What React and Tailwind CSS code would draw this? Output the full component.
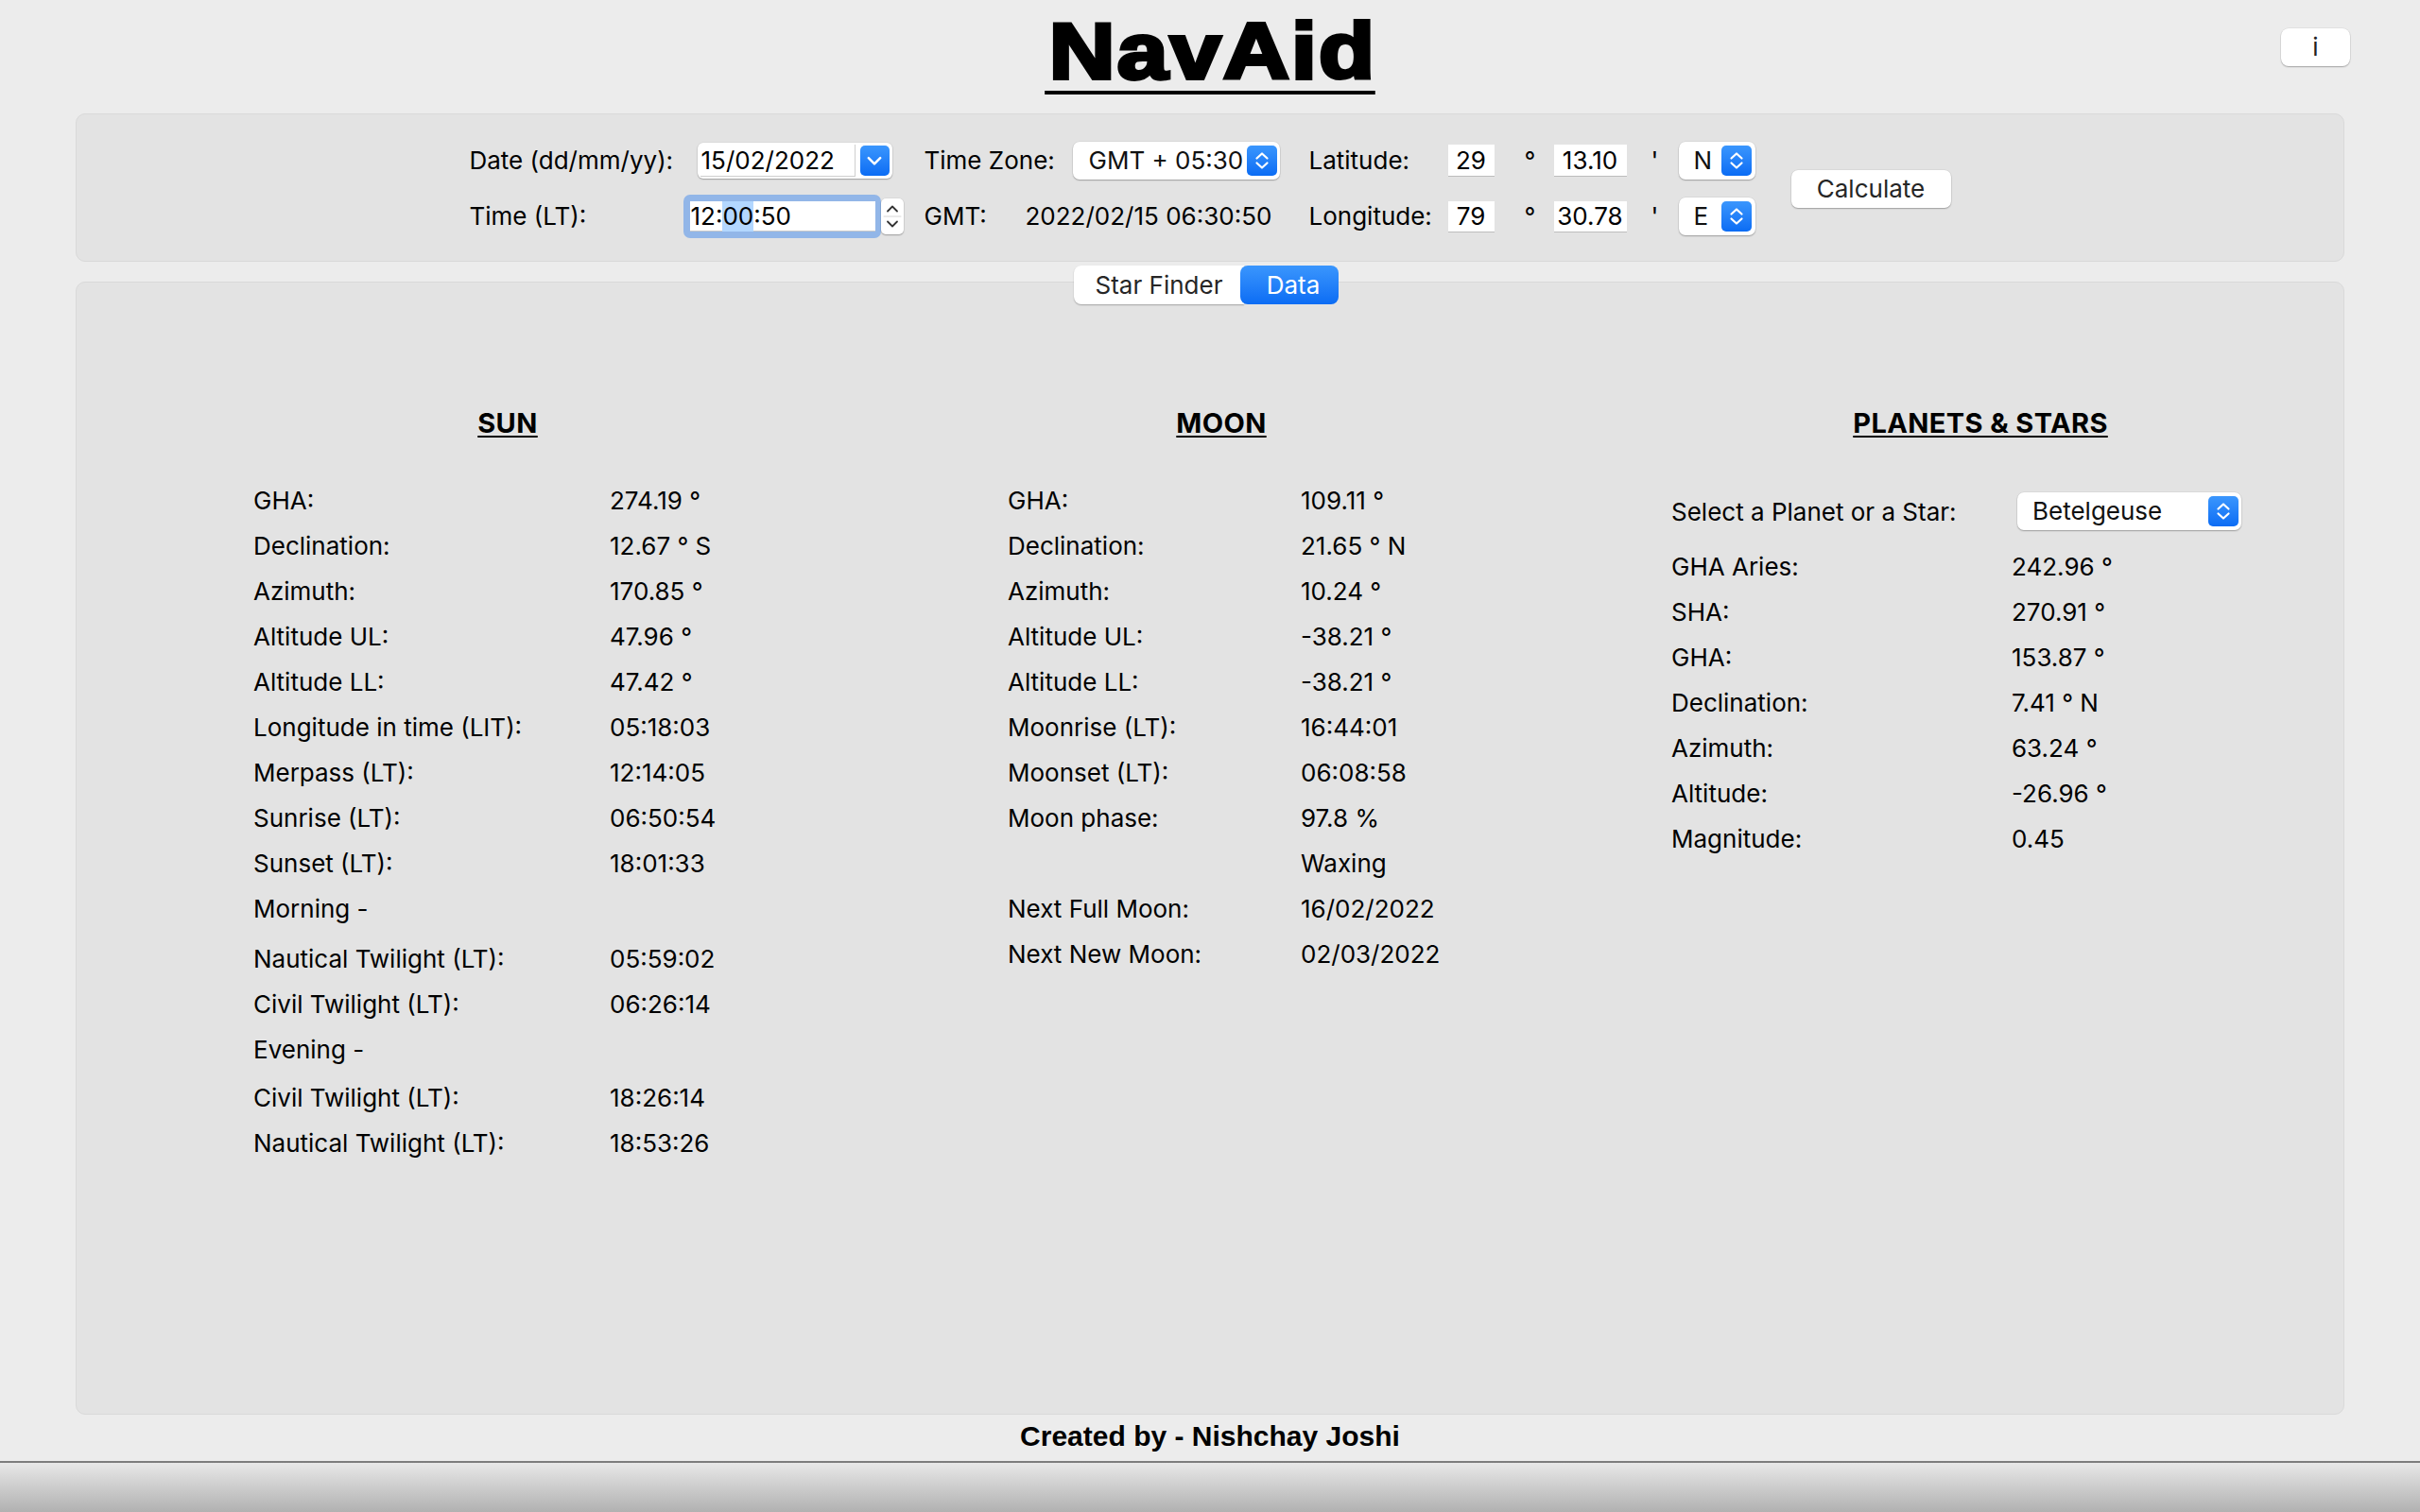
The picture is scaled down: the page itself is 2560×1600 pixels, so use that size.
import React from "react";

function UpDown() {
  return (
    <svg viewBox="0 0 20 24" className="h-[24px] w-[20px]" fill="none" stroke="white" strokeWidth="2.2" strokeLinecap="round" strokeLinejoin="round">
      <path d="M4.5 9.5 L10 4.5 L15.5 9.5" />
      <path d="M4.5 14.5 L10 19.5 L15.5 14.5" />
    </svg>
  );
}

function ChevDown() {
  return (
    <svg viewBox="0 0 16 16" className="h-[18px] w-[18px]" fill="none" stroke="white" strokeWidth="2.2" strokeLinecap="round" strokeLinejoin="round">
      <path d="M2.5 5.5 L8 11 L13.5 5.5" />
    </svg>
  );
}

const ctl = "bg-white shadow-[0_1px_1.5px_rgba(0,0,0,0.28),0_0_0_0.5px_rgba(0,0,0,0.08)]";
const blue = "bg-linear-to-b from-[#3a96fd] to-[#0a6cf4]";

function Select({ text, wcls, pl, btn }) {
  return (
    <div className={`flex h-[40px] items-center rounded-[7px] ${ctl} ${wcls}`}>
      <span className={`${pl} leading-none text-[#111]`}>{text}</span>
      <div className={`ml-auto flex h-[32px] w-[32px] items-center justify-center rounded-[5px] ${blue} ${btn}`}>
        <UpDown />
      </div>
    </div>
  );
}

function NumBox({ text, h }) {
  return (
    <div className={`flex w-[49px] items-center justify-center border-b border-[#bdbdbd] bg-white leading-none ${h}`}>{text}</div>
  );
}

function NumBoxW({ text, h }) {
  return (
    <div className={`flex w-[77px] items-center justify-center border-b border-[#bdbdbd] bg-white leading-none ${h}`}>{text}</div>
  );
}

const sun = [
  ["GHA:", "274.19 °"],
  ["Declination:", "12.67 ° S"],
  ["Azimuth:", "170.85 °"],
  ["Altitude UL:", "47.96 °"],
  ["Altitude LL:", "47.42 °"],
  ["Longitude in time (LIT):", "05:18:03"],
  ["Merpass (LT):", "12:14:05"],
  ["Sunrise (LT):", "06:50:54"],
  ["Sunset (LT):", "18:01:33"],
  ["Morning -", "", "mb-[5px]"],
  ["Nautical Twilight (LT):", "05:59:02"],
  ["Civil Twilight (LT):", "06:26:14"],
  ["Evening -", "", "mb-[3px]"],
  ["Civil Twilight (LT):", "18:26:14"],
  ["Nautical Twilight (LT):", "18:53:26"],
];

const moon = [
  ["GHA:", "109.11 °"],
  ["Declination:", "21.65 ° N"],
  ["Azimuth:", "10.24 °"],
  ["Altitude UL:", "-38.21 °"],
  ["Altitude LL:", "-38.21 °"],
  ["Moonrise (LT):", "16:44:01"],
  ["Moonset (LT):", "06:08:58"],
  ["Moon phase:", "97.8 %"],
  ["", "Waxing"],
  ["Next Full Moon:", "16/02/2022"],
  ["Next New Moon:", "02/03/2022"],
];

const planets = [
  ["GHA Aries:", "242.96 °"],
  ["SHA:", "270.91 °"],
  ["GHA:", "153.87 °"],
  ["Declination:", "7.41 ° N"],
  ["Azimuth:", "63.24 °"],
  ["Altitude:", "-26.96 °"],
  ["Magnitude:", "0.45"],
];

function Rows({ data, cols }) {
  return (
    <div className={`grid ${cols} leading-[48px]`}>
      {data.map(([l, v, extra], i) => (
        <React.Fragment key={i}>
          <div className={`h-[48px] whitespace-nowrap ${extra || ""}`}>{l}</div>
          <div className="h-[48px] whitespace-nowrap">{v}</div>
        </React.Fragment>
      ))}
    </div>
  );
}

function Heading({ children }) {
  return (
    <h2 className="text-center text-[29px] font-bold leading-[34px] tracking-[0.4px] underline decoration-2 underline-offset-[3px]">{children}</h2>
  );
}

export default function App() {
  return (
    <div className="flex h-[1600px] w-full flex-col overflow-hidden bg-[#ececec] font-['Inter',sans-serif] text-[26px] text-black">
      {/* header */}
      <div className="grid h-[120px] shrink-0 grid-cols-[1fr_auto_1fr]">
        <div />
        <div className="pt-[12px]">
          <h1 className="scale-x-[1.15] border-b-[4px] border-black pl-[4px] pr-[1px] font-['Liberation_Sans',Arial,sans-serif] text-[84px] font-bold leading-[84px] tracking-[2px] [-webkit-text-stroke:4px_black]">
            NavAi<span className="tracking-normal">d</span>
          </h1>
        </div>
        <div className="flex items-start justify-end pr-[74px] pt-[30px]">
          <button className={`flex h-[40px] w-[73px] items-center justify-center rounded-[8px] text-[26px] leading-none text-[#222] ${ctl}`}>i</button>
        </div>
      </div>

      {/* control panel */}
      <div className="mx-[80px] flex h-[157px] shrink-0 items-center justify-center rounded-[10px] border border-[#d9d9d9] bg-[#e3e3e3]">
        <div className="grid grid-cols-[226px_255px_407px_147px_49px_63px_77px_55px_81px_38px_169px] grid-rows-[48px_48px] items-center gap-y-[11px] pt-[2px] leading-[32px]">
          {/* row 1 */}
          <div className="whitespace-nowrap">Date (dd/mm/yy):</div>
          <div className="pl-[15px]">
            <div className={`flex h-[38px] w-[206px] items-center rounded-[6px] pl-[3px] ${ctl}`}>
              <div className="flex h-[34px] w-[164px] items-center border-b border-r border-[#cfcfcf] pl-[1px] leading-none">15/02/2022</div>
              <div className={`ml-auto mr-[3px] flex h-[32px] w-[31px] items-center justify-center rounded-[5px] ${blue}`}>
                <ChevDown />
              </div>
            </div>
          </div>
          <div className="flex items-center">
            <span className="w-[157px] whitespace-nowrap">Time Zone:</span>
            <Select text="GMT + 05:30" wcls="w-[219px]" pl="pl-[17px]" btn="mr-[3px]" />
          </div>
          <div>Latitude:</div>
          <NumBox text="29" h="h-[34px]" />
          <div className="pl-[32px]">°</div>
          <NumBoxW text="13.10" h="h-[34px]" />
          <div className="pl-[26px]">'</div>
          <Select text="N" wcls="w-[81px]" pl="pl-[16px]" btn="mr-[4px] w-[31px]" />
          <div />
          <div className="col-start-11 row-span-2 row-start-1 flex items-center">
            <button className={`flex h-[40px] w-[169px] items-center justify-center rounded-[7px] text-[26px] leading-none text-[#262626] ${ctl}`}>Calculate</button>
          </div>

          {/* row 2 */}
          <div className="whitespace-nowrap">Time (LT):</div>
          <div className="flex items-center">
            <div className="rounded-[7px] bg-[#92b6e8] py-[7px] pl-[7px] pr-[6px]">
              <div className="flex h-[32px] w-[196px] items-center border-b border-[#c9c9c9] bg-white pl-[1px] leading-[32px]">
                <span>12:</span>
                <span className="bg-[#b3d7ff]">00</span>
                <span>:50</span>
              </div>
            </div>
            <div className={`flex h-[38px] w-[24px] flex-col items-center justify-center rounded-[5px] ${ctl}`}>
              <svg viewBox="0 0 24 38" className="h-[38px] w-[24px]" fill="none" stroke="#333" strokeWidth="1.8" strokeLinecap="round" strokeLinejoin="round">
                <path d="M7 13.5 L12 8.5 L17 13.5" />
                <path d="M3 19 L21 19" stroke="#d6d6d6" strokeWidth="1" />
                <path d="M7 24.5 L12 29.5 L17 24.5" />
              </svg>
            </div>
          </div>
          <div className="flex items-center">
            <span className="w-[107px]">GMT:</span>
            <span className="whitespace-nowrap">2022/02/15 06:30:50</span>
          </div>
          <div>Longitude:</div>
          <NumBox text="79" h="h-[33px]" />
          <div className="pl-[32px]">°</div>
          <NumBoxW text="30.78" h="h-[33px]" />
          <div className="pl-[26px]">'</div>
          <Select text="E" wcls="w-[81px]" pl="pl-[16px]" btn="mr-[4px] w-[31px]" />
          <div />
        </div>
      </div>

      {/* data panel */}
      <div className="mx-[80px] mt-[21px] flex h-[1199px] shrink-0 flex-col rounded-[10px] border border-[#d9d9d9] bg-[#e3e3e3]">
        <div className="-mt-[18px] flex justify-center pr-[8px]">
          <div className="flex h-[41px] items-stretch leading-none">
            <div className="flex w-[180px] items-center justify-center rounded-l-[8px] bg-white text-[#262626] shadow-[0_1px_1.5px_rgba(0,0,0,0.28)]">Star Finder</div>
            <div className={`-ml-[4px] flex w-[104px] items-center justify-center rounded-[8px] pl-[8px] text-white ${blue}`}>Data</div>
          </div>
        </div>

        <div className="mt-[109px] flex pl-[187px]">
          <div className="w-[538px]">
            <Heading>SUN</Heading>
            <div className="mt-[41px]">
              <Rows data={sun} cols="grid-cols-[377px_1fr]" />
            </div>
          </div>
          <div className="ml-[260px] w-[452px]">
            <Heading>MOON</Heading>
            <div className="mt-[41px]">
              <Rows data={moon} cols="grid-cols-[310px_1fr]" />
            </div>
          </div>
          <div className="ml-[250px] w-[654px]">
            <Heading>PLANETS &amp; STARS</Heading>
            <div className="mt-[52px] flex h-[48px] items-center">
              <span className="w-[366px] whitespace-nowrap">Select a Planet or a Star:</span>
              <Select text="Betelgeuse" wcls="w-[237px]" pl="pl-[16px]" btn="mr-[3px]" />
            </div>
            <div className="mt-[11px]">
              <Rows data={planets} cols="grid-cols-[360px_1fr]" />
            </div>
          </div>
        </div>
      </div>

      {/* footer */}
      <div className="h-[49px] shrink-0 pt-[6px] text-center font-['Liberation_Sans',Arial,sans-serif] text-[30px] font-bold leading-[34px]">
        Created by - Nishchay Joshi
      </div>
      <div className="h-[54px] shrink-0 border-t-2 border-[#7d7d7d] bg-linear-to-b from-[#e8e8e8] to-[#b1b1b1]" />
    </div>
  );
}
